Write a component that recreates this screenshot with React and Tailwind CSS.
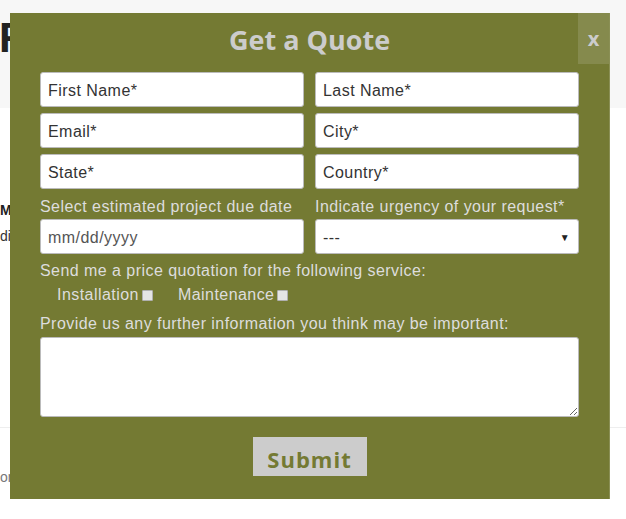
import React from "react";

const inputCls =
  "w-full h-[35px] bg-white border border-[#bbbbbb] rounded-[3px] px-[7px] pt-[2px] text-[16px] tracking-[0.45px] text-[#333333] placeholder:text-[#333333] outline-none";

const Field = ({ placeholder }) => (
  <input className={inputCls} placeholder={placeholder} />
);

const QuoteModal = () => (
  <div className="absolute left-[10px] top-[13px] w-[600px] h-[486px] bg-[#747a33] border-r border-[#8a8f55]">
    <button className="absolute right-0 top-0 w-[31px] h-[51px] bg-[#858a4d] text-[#cccccc] text-[20px] font-bold font-['Open_Sans',sans-serif] flex items-center justify-center">
      x
    </button>

    <h2 className="h-[59px] pt-[9px] text-center text-[27px] leading-[36px] font-bold text-[#cccccc] font-['Open_Sans',sans-serif]">
      Get a Quote
    </h2>

    <div className="px-[30px] font-['Liberation_Sans',sans-serif] tracking-[0.45px]">
      <div className="grid grid-cols-2 gap-x-[11px] gap-y-[6px]">
        <Field placeholder="First Name*" />
        <Field placeholder="Last Name*" />
        <Field placeholder="Email*" />
        <Field placeholder="City*" />
        <Field placeholder="State*" />
        <Field placeholder="Country*" />
      </div>

      <div className="grid grid-cols-2 gap-x-[11px] mt-[6px]">
        <div>
          <label className="block text-[16px] leading-[24px] text-[#dddddd]">
            Select estimated project due date
          </label>
          <input className={inputCls + " placeholder:text-[#555555]"} placeholder="mm/dd/yyyy" />
        </div>
        <div>
          <label className="block text-[16px] leading-[24px] text-[#dddddd]">
            Indicate urgency of your request*
          </label>
          <div className={inputCls + " flex items-center justify-between"}>
            <span>---</span>
            <span className="text-[10px] text-[#222222] mr-[1px]">▼</span>
          </div>
        </div>
      </div>

      <p className="mt-[5px] text-[16px] leading-[24px] text-[#dddddd]">
        Send me a price quotation for the following service:
      </p>
      <div className="flex items-center h-[24px] pl-[17px] text-[16px] text-[#dddddd]">
        <span>Installation</span>
        <span className="ml-[3px] w-[11px] h-[11px] bg-[#e4e4e4] border border-[#b0b0b0] rounded-[1px]" />
        <span className="ml-[25px]">Maintenance</span>
        <span className="ml-[3px] w-[11px] h-[11px] bg-[#e4e4e4] border border-[#b0b0b0] rounded-[1px]" />
      </div>

      <p className="mt-[5px] text-[16px] leading-[24px] text-[#dddddd]">
        Provide us any further information you think may be important:
      </p>
      <textarea className="block mt-[1px] w-full h-[80px] bg-white border border-[#bbbbbb] rounded-[3px] resize-y outline-none" />

      <div className="flex justify-center mt-[20px]">
        <button className="w-[114px] h-[39px] bg-[#cccccc] text-[#747a33] text-[22px] font-bold tracking-[1px] font-['Open_Sans',sans-serif] pt-[6px]">
          Submit
        </button>
      </div>
    </div>
  </div>
);

export default function App() {
  return (
    <div className="relative w-[626px] h-[519px] overflow-hidden bg-white font-['Liberation_Sans',sans-serif]">
      <div className="h-[108px] bg-[#f7f7f7] pt-[16px]">
        <h1 className="ml-[-1px] text-[42px] leading-[44px] font-bold text-[#222222]">Free</h1>
      </div>
      <div className="pt-[93px]">
        <p className="text-[14px] leading-[18px] font-bold text-[#222222]">MN</p>
        <p className="mt-[8px] text-[14px] leading-[18px] text-[#333333]">dia</p>
      </div>
      <div className="mt-[182px] border-t border-[#eeeeee]" />
      <p className="mt-[40px] text-[14px] leading-[18px] text-[#777777]">or</p>

      <QuoteModal />
    </div>
  );
}
